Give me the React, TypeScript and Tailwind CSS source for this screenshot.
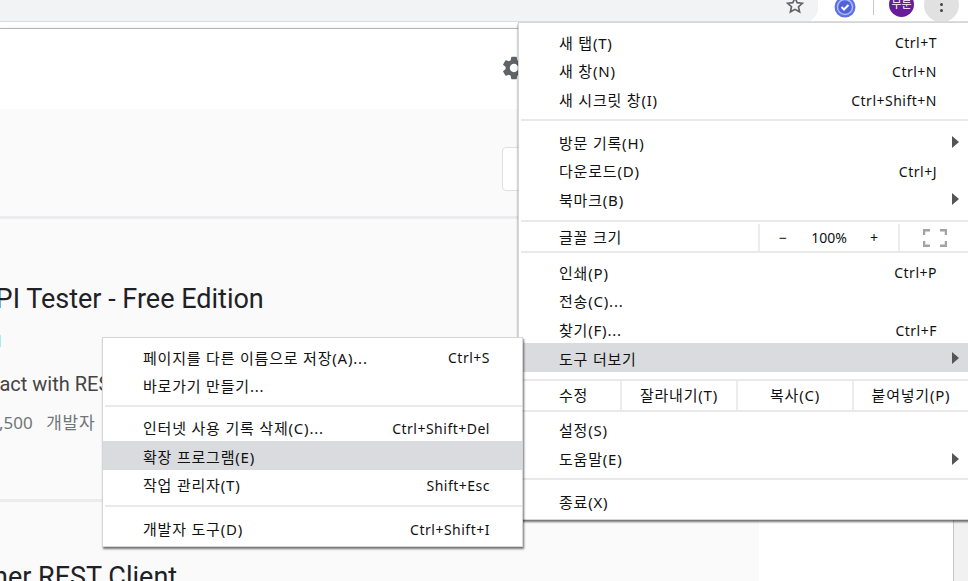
import React from "react";
import { MdSettings } from "react-icons/md";

const font = "font-['Noto_Sans','Noto_Sans_CJK_KR',sans-serif]";
const labelText = "text-[15px] tracking-[0.8px] text-[#111]";

function Row({ label, keys, arrow, active }: { label: string; keys?: string; arrow?: boolean; active?: boolean }) {
    return (
        <div className={`relative flex h-[28.7px] items-center justify-between pl-[40px] pr-[32px] pt-[3px] ${active ? "bg-[#dadbde]" : ""}`}>
            <span className={labelText}>{label}</span>
            {keys && <span className="text-[14px] tracking-[0.5px] text-[#111]">{keys}</span>}
            {arrow && <span className="absolute right-[10px] top-[9px] h-0 w-0 border-y-[6px] border-l-[7px] border-y-transparent border-l-[#555]"></span>}
        </div>
    );
}

function Sep({ top, bottom }: { top: string; bottom: string }) {
    return <div className={`ml-[2px] h-[2px] bg-[#e9e9e9] ${top} ${bottom}`}></div>;
}

function MainMenu() {
    return (
        <div className="absolute left-[518px] top-[22px] h-[498px] w-[452px] border border-[#d6d6d6] bg-white pt-[4px] shadow-[0_2px_2px_rgba(0,0,0,0.55)]">
            <Row label="새 탭(T)" keys="Ctrl+T" />
            <Row label="새 창(N)" keys="Ctrl+N" />
            <Row label="새 시크릿 창(I)" keys="Ctrl+Shift+N" />
            <Sep top="mt-[6px]" bottom="mb-[6px]" />
            <Row label="방문 기록(H)" arrow />
            <Row label="다운로드(D)" keys="Ctrl+J" />
            <Row label="북마크(B)" arrow />
            <Sep top="mt-[7px]" bottom="mb-0" />

            {/* zoom */}
            <div className="flex h-[29px] items-center pt-[2px]">
                <span className={`w-[239px] pl-[40px] ${labelText}`}>글꼴 크기</span>
                <div className="flex h-full w-[140px] items-center border-l-2 border-[#ececec] text-[14px] text-[#111]">
                    <span className="w-[46px] text-center">−</span>
                    <span className="w-[46px] text-center">100%</span>
                    <span className="w-[44px] text-center">+</span>
                </div>
                <div className="flex h-full flex-1 items-center border-l-2 border-[#ececec] pl-[23px]">
                    <svg width="24" height="18" viewBox="0 0 24 18" fill="none" stroke="#a3a3a3" strokeWidth="2.5">
                        <path d="M1 6V1.2H7M17 1.2H23V6M23 12V16.8H17M7 16.8H1V12" />
                    </svg>
                </div>
            </div>
            <Sep top="mt-0" bottom="mb-[4px]" />

            <Row label="인쇄(P)" keys="Ctrl+P" />
            <Row label="전송(C)..." />
            <Row label="찾기(F)..." keys="Ctrl+F" />
            <Row label="도구 더보기" arrow active />
            <Sep top="mt-[7px]" bottom="mb-0" />

            {/* edit */}
            <div className={`flex h-[29px] items-center ${labelText}`}>
                <span className="w-[101px] pl-[40px]">수정</span>
                <span className="flex h-full w-[116px] items-center justify-center border-l-2 border-[#ececec]">잘라내기(T)</span>
                <span className="flex h-full w-[116px] items-center justify-center border-l-2 border-[#ececec]">복사(C)</span>
                <span className="flex h-full w-[116px] items-center justify-center border-l-2 border-[#ececec]">붙여넣기(P)</span>
            </div>
            <Sep top="mt-0" bottom="mb-[3px]" />

            <Row label="설정(S)" />
            <Row label="도움말(E)" arrow />
            <Sep top="mt-[6px]" bottom="mb-[6px]" />
            <Row label="종료(X)" />
        </div>
    );
}

function SubMenu() {
    return (
        <div className="absolute left-[102px] top-[337px] h-[210px] w-[421px] border border-[#d6d6d6] bg-white pt-[4px] shadow-[1px_2px_2px_rgba(0,0,0,0.55)]">
            <Row label="페이지를 다른 이름으로 저장(A)..." keys="Ctrl+S" />
            <Row label="바로가기 만들기..." />
            <Sep top="mt-[6px]" bottom="mb-[5px]" />
            <Row label="인터넷 사용 기록 삭제(C)..." keys="Ctrl+Shift+Del" />
            <Row label="확장 프로그램(E)" active />
            <Row label="작업 관리자(T)" keys="Shift+Esc" />
            <Sep top="mt-[7px]" bottom="mb-[6px]" />
            <Row label="개발자 도구(D)" keys="Ctrl+Shift+I" />
        </div>
    );
}

export default function App() {
    return (
        <div className={`relative h-[581px] w-[968px] overflow-hidden bg-white ${font}`}>
            {/* toolbar */}
            <div className="flex h-[22px] items-center overflow-hidden border-b border-[#dadce0] bg-white">
                <div className="flex h-[22px] w-[818px] justify-end rounded-br-[14px] bg-[#f1f3f4] pr-[13px]">
                    <svg width="20" height="20" viewBox="0 0 24 24" fill="none" stroke="#5f6368" strokeWidth="2" className="-mt-[5px]">
                        <path d="M12 3.5l2.6 5.7 6.2.7-4.6 4.2 1.3 6.1L12 17.2l-5.5 3 1.3-6.1-4.6-4.2 6.2-.7z" />
                    </svg>
                </div>
                <svg width="22" height="22" viewBox="0 0 22 22" className="-mt-[8px] ml-[16px]">
                    <circle cx="11" cy="11" r="10.5" fill="#5f72e4" />
                    <circle cx="11" cy="11" r="7.5" fill="#4f63dc" stroke="#aeb8f3" strokeWidth="1.5" />
                    <path d="M7.5 11l2.5 2.5 4.5-4.5" fill="none" stroke="#ffffff" strokeWidth="2" />
                </svg>
                <div className="-mt-[7px] ml-[17px] h-[15px] w-px bg-[#c8c8c8]"></div>
                <div className="-mt-[12px] ml-[15px] flex h-[25px] w-[25px] items-center justify-center rounded-full bg-[#6a1b9a] text-[11px] text-white">무룬</div>
                <div className="-mt-[12px] ml-[10px] flex h-[34px] w-[35px] flex-col items-center justify-center gap-[3px] rounded-full bg-[#e1e1e1]">
                    <span className="h-[3px] w-[3px] rounded-full bg-[#444]"></span>
                    <span className="h-[3px] w-[3px] rounded-full bg-[#444]"></span>
                    <span className="h-[3px] w-[3px] rounded-full bg-[#444]"></span>
                </div>
            </div>

            {/* page header */}
            <div className="mt-[6px] flex h-[81px] items-center justify-end border-t border-[#b5b5b5] bg-white pr-[440px] shadow-[0_1px_4px_rgba(0,0,0,0.15)]">
                <MdSettings className="-mt-[2px] text-[#5f6368]" size={28} />
            </div>

            {/* store content */}
            <div className="h-[472px] bg-[#fafafa]">
                <div className="flex h-[110px] items-start justify-end border-b-[3px] border-[#ebebf0] pr-[440px] pt-[38px]">
                    <div className="h-[44px] w-[26px] rounded-[4px] border border-[#e0e0e0] bg-white"></div>
                </div>
                <div className="flex h-[283px] flex-col border-b-[3px] border-[#ececec]">
                    <h2 className="-ml-[22px] mt-[62px] whitespace-nowrap font-['Roboto',sans-serif] text-[27px] leading-[36px] text-[#202124]">API Tester - Free Edition</h2>
                    <div className="mt-[18px] h-[12px] w-px bg-[#a5ecf7]"></div>
                    <p className="-ml-[40px] mt-[24px] whitespace-nowrap font-['Roboto',sans-serif] text-[20px] leading-[26px] text-[#444]">interact with REST</p>
                    <p className="-ml-[1px] mt-[15px] whitespace-nowrap text-[17px] leading-[22px] text-[#70757a]">
                        ,500 <span className="ml-[9px] tracking-[0.8px]">개발자</span>
                    </p>
                </div>
                <div className="relative flex h-[79px] justify-between">
                    <h2 className="-ml-[7px] mt-[57px] whitespace-nowrap font-['Roboto',sans-serif] text-[27px] leading-[36px] text-[#202124]">ner REST Client</h2>
                    <div className="flex w-[209px]">
                        <div className="w-[194px] bg-white"></div>
                        <div className="relative flex-1 border-l border-[#c6c6c6] bg-[#f1f1f1]">
                            <div className="h-[8px] bg-[#a8a8a8]"></div>
                        </div>
                    </div>
                </div>
            </div>

            <MainMenu />
            <SubMenu />
        </div>
    );
}
